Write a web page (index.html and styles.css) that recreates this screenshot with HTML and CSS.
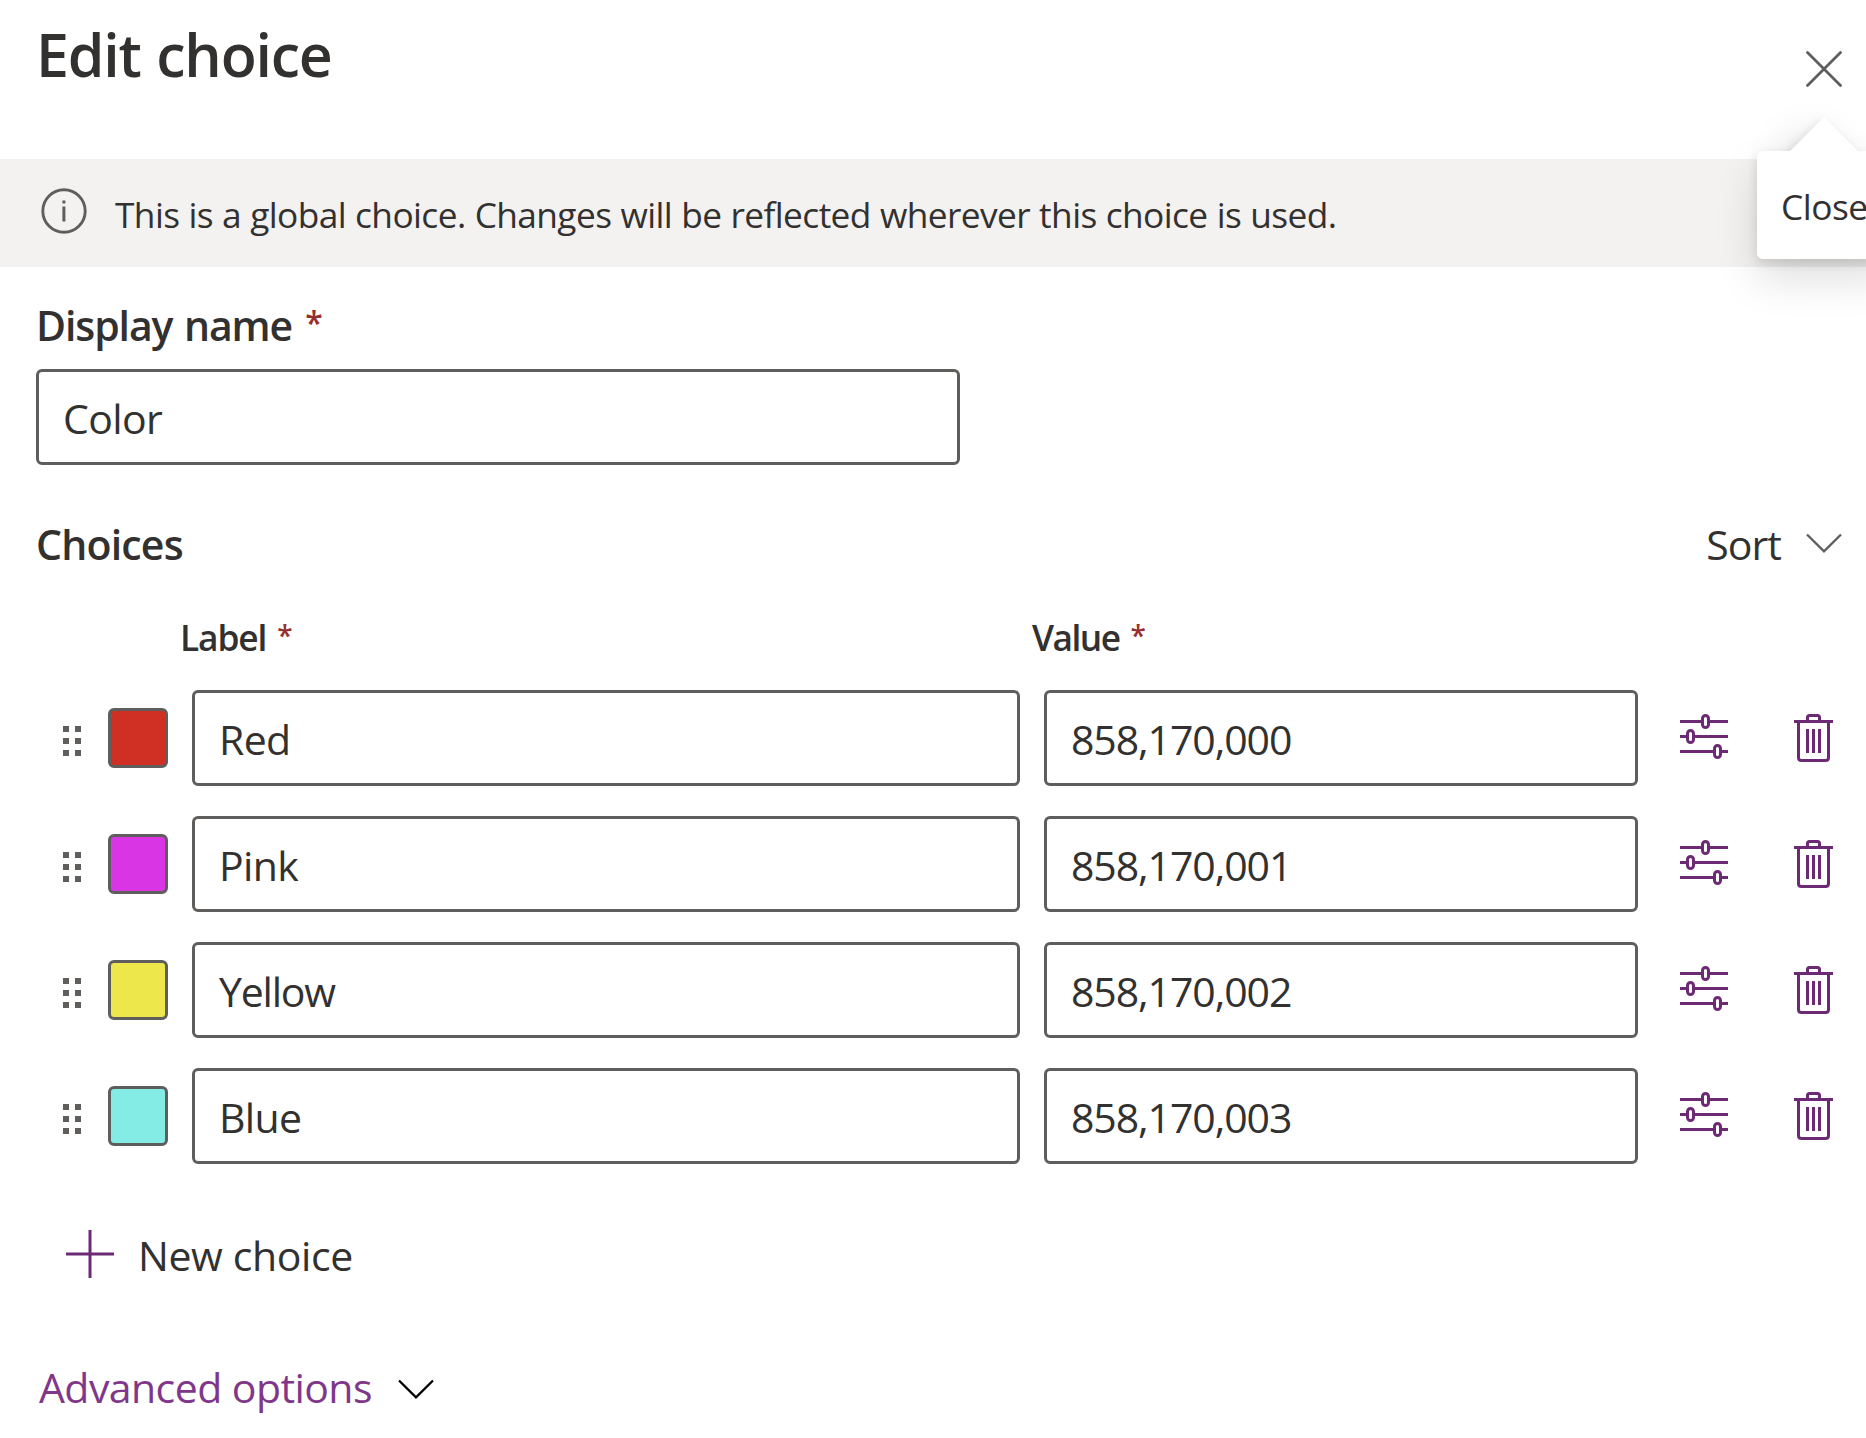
FILE: index.html
```
<!DOCTYPE html>
<html lang="en">
<head>
<meta charset="utf-8">
<title>Edit choice</title>
<link rel="stylesheet" href="styles.css">
</head>
<body>
<svg class="defs" width="0" height="0" aria-hidden="true">
  <symbol id="grip" viewBox="0 0 18 30"><path d="M0 0h6v6H0zM12 0h6v6h-6zM0 12h6v6H0zM12 12h6v6h-6zM0 24h6v6H0zM12 24h6v6h-6z" fill="currentColor"/></symbol>
  <symbol id="sliders" viewBox="0 0 48 45"><g fill="none" stroke="currentColor" stroke-width="3"><path d="M0 7.5h22M29 7.5h19M0 22.5h7M14 22.5h34M0 37.5h34M41 37.5h7"/><rect x="22.5" y="1.5" width="6" height="12" rx="3"/><rect x="7.5" y="16.5" width="6" height="12" rx="3"/><rect x="34.5" y="31.5" width="6" height="12" rx="3"/></g></symbol>
  <symbol id="trash" viewBox="0 0 39 48"><g fill="none" stroke="currentColor" stroke-width="3"><path d="M0 7.5h39M4.5 7.5v36q0 3 3 3h24q3 0 3-3v-36M13.5 7.5v-4q0-2 2-2h8q2 0 2 2v4M13.5 15v24M19.5 15v24M25.5 15v24"/></g></symbol>
  <symbol id="chevron" viewBox="0 0 36 20"><path d="M1 1.5L18 18.3L35 1.5" fill="none" stroke="currentColor" stroke-width="2.3"/></symbol>
</svg>

<header class="header">
  <h1 class="title">Edit choice</h1>
  <button class="close" aria-label="Close">
    <svg width="36" height="36" viewBox="0 0 36 36"><path d="M1.5 1.5L34.5 34.5M34.5 1.5L1.5 34.5" stroke="currentColor" stroke-width="2.8" stroke-linecap="round"/></svg>
  </button>
  <div class="tooltip"><span class="beak"></span><span class="tip-text">Close</span></div>
</header>

<div class="banner">
  <svg class="info" width="46" height="46" viewBox="0 0 46 46"><circle cx="23" cy="23" r="21.2" fill="none" stroke="currentColor" stroke-width="2.9"/><path d="M21.4 12.5h3v3h-3zM21.4 18.5h3v15h-3z" fill="currentColor"/></svg>
  <span class="banner-text">This is a global choice. Changes will be reflected wherever this choice is used.</span>
</div>

<main class="content">
  <div class="name-label">Display name<span class="req">*</span></div>
  <div class="field name-field">Color</div>

  <div class="choices-head">
    <h2 class="choices-title">Choices</h2>
    <div class="sort"><span>Sort</span><svg width="36" height="20"><use href="#chevron"/></svg></div>
  </div>

  <div class="columns">
    <div class="col-label">Label<span class="req small">*</span></div>
    <div class="col-value">Value<span class="req small">*</span></div>
  </div>

  <div class="rows">
    <div class="row">
      <svg class="grip" width="18" height="30"><use href="#grip"/></svg>
      <span class="swatch red"></span>
      <div class="field">Red</div>
      <div class="field number">858,170,000</div>
      <svg class="sliders" width="48" height="45"><use href="#sliders"/></svg>
      <svg class="trash" width="39" height="48"><use href="#trash"/></svg>
    </div>
    <div class="row">
      <svg class="grip" width="18" height="30"><use href="#grip"/></svg>
      <span class="swatch pink"></span>
      <div class="field">Pink</div>
      <div class="field number">858,170,001</div>
      <svg class="sliders" width="48" height="45"><use href="#sliders"/></svg>
      <svg class="trash" width="39" height="48"><use href="#trash"/></svg>
    </div>
    <div class="row">
      <svg class="grip" width="18" height="30"><use href="#grip"/></svg>
      <span class="swatch yellow"></span>
      <div class="field tight">Yellow</div>
      <div class="field number">858,170,002</div>
      <svg class="sliders" width="48" height="45"><use href="#sliders"/></svg>
      <svg class="trash" width="39" height="48"><use href="#trash"/></svg>
    </div>
    <div class="row">
      <svg class="grip" width="18" height="30"><use href="#grip"/></svg>
      <span class="swatch blue"></span>
      <div class="field">Blue</div>
      <div class="field number">858,170,003</div>
      <svg class="sliders" width="48" height="45"><use href="#sliders"/></svg>
      <svg class="trash" width="39" height="48"><use href="#trash"/></svg>
    </div>
  </div>

  <div class="new-choice">
    <svg width="48" height="48" viewBox="0 0 48 48"><path d="M0 24h48M24 0v48" stroke="currentColor" stroke-width="3"/></svg>
    <span class="new-text">New choice</span>
  </div>

  <div class="advanced">
    <span>Advanced options</span>
    <svg width="36" height="20"><use href="#chevron"/></svg>
  </div>
</main>
</body>
</html>
```
FILE: styles.css
```
* { box-sizing: border-box; }

html, body { margin: 0; height: 1438px; overflow: hidden; }

body {
  background: #fff;
  color: #323130;
  font: 400 41px/56px "Open Sans", "Noto Sans", sans-serif;
}

svg { display: block; flex: none; }
.defs { position: absolute; }

.header {
  position: relative;
  display: flex;
  justify-content: space-between;
  align-items: flex-start;
  height: 159px;
  padding: 14px 24px 0 36px;
}
.title { margin: 0; font-size: 59px; line-height: 80px; font-weight: 600; letter-spacing: -1.2px; word-spacing: 1.5px; }
.close { margin: 37px 0 0; padding: 0; border: 0; background: none; color: #605e5c; }

.tooltip {
  position: absolute;
  z-index: 1;
  left: 1757px;
  top: 151px;
  width: 134px;
  height: 108px;
  border-radius: 6px;
  box-shadow: 0 19px 43px rgba(0, 0, 0, .132), 0 4px 11px rgba(0, 0, 0, .108);
}
.tooltip::after { content: ""; position: absolute; inset: 0; background: #fff; border-radius: 6px; }
.beak {
  position: absolute;
  left: 43px;
  top: -24px;
  width: 48px;
  height: 48px;
  background: #fff;
  transform: rotate(45deg);
  box-shadow: 0 19px 43px rgba(0, 0, 0, .132), 0 4px 11px rgba(0, 0, 0, .108);
}
.tip-text {
  position: absolute;
  z-index: 1;
  left: 24px;
  top: 31px;
  font-size: 35.3px;
  line-height: 48px;
  letter-spacing: -.5px;
}

.banner { display: flex; gap: 28px; height: 108px; padding: 30px 0 0 41px; background: #f3f2f1; }
.info { color: #605e5c; margin-top: -1px; }
.banner-text { margin-top: 1px; font-size: 35.3px; line-height: 48px; letter-spacing: -.6px; word-spacing: .5px; white-space: nowrap; }

.content { padding: 30px 25px 0 36px; }

.name-label { font-weight: 600; letter-spacing: -1.1px; word-spacing: 2px; }
.req { display: inline-block; margin-left: 13px; color: #963030; font-size: 32px; line-height: 0; vertical-align: 6px; }
.req.small { margin-left: 11px; font-size: 28px; vertical-align: 5px; }

.field {
  height: 96px;
  padding: 18px 24px 0;
  border: 3px solid #605e5c;
  border-radius: 6px;
  letter-spacing: -.65px;
  white-space: nowrap;
}
.name-field { width: 924px; margin-top: 16px; }
.number { letter-spacing: -1.08px; }
.tight { letter-spacing: -1.2px; }

.choices-head { display: flex; justify-content: space-between; margin-top: 51px; }
.choices-title { margin: 0; font-size: 41px; line-height: 56px; font-weight: 600; letter-spacing: -.8px; }
.sort { display: flex; gap: 25px; letter-spacing: -.97px; }
.sort svg { margin: 17px -1px 0 0; color: #605e5c; }

.columns {
  display: grid;
  grid-template-columns: 852px 1fr;
  margin: 41px 0 29px 144px;
  font-size: 35.3px;
  line-height: 48px;
  font-weight: 600;
}
.col-label { letter-spacing: -1.1px; }
.col-value { letter-spacing: -1.5px; }

.rows { display: flex; flex-direction: column; gap: 30px; }
.row {
  display: grid;
  grid-template-columns: 18px 60px 828px 594px 48px 39px;
  column-gap: 24px;
  padding-left: 27px;
}
.grip { margin-top: 36px; color: #605e5c; }
.swatch { width: 60px; height: 60px; margin: 18px 0 0 3px; border: 3px solid #605e5c; border-radius: 6px; }
.row .field { margin-left: 3px; margin-right: -3px; }
.red { background: #d03024; }
.pink { background: #da35e5; }
.yellow { background: #ede74b; }
.blue { background: #84ece4; }
.sliders, .trash { color: #6b2a73; }
.sliders { margin: 24px 0 0 21px; }
.trash { margin: 24px 0 0 63px; }

.new-choice { display: flex; gap: 24px; margin: 63px 0 0 30px; }
.new-choice svg { margin-top: 3px; color: #6b2a73; }
.new-text { letter-spacing: -.4px; }

.advanced { display: flex; gap: 26px; margin: 76px 0 0 3px; color: #80378a; letter-spacing: -.56px; }
.advanced svg { margin-top: 20px; color: #000; }
```
